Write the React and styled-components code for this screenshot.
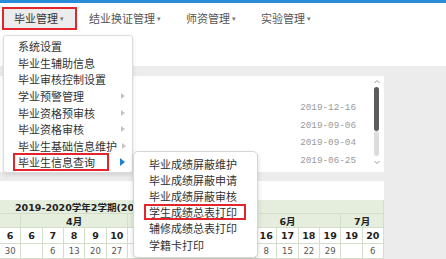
import React from 'react';
import styled, { createGlobalStyle } from 'styled-components';

const GlobalStyle = createGlobalStyle`
  html, body {
    margin: 0;
    padding: 0;
    background: #fff;
  }
  body {
    font-family: "Noto Sans CJK SC", "Liberation Sans", sans-serif;
    width: 446px;
    height: 259px;
    overflow: hidden;
  }
`;

const Page = styled.div`
  position: relative;
  width: 446px;
  height: 259px;
  overflow: hidden;
  display: flex;
  flex-direction: column;
`;

const TopStrip = styled.div`
  height: 3px;
  background: #2b8bd9;
`;

const NavBar = styled.nav`
  height: 30px;
  display: flex;
  align-items: center;
  padding-left: 2px;
  background: #fff;
`;

const NavItem = styled.div`
  box-sizing: border-box;
  height: 23px;
  display: flex;
  align-items: center;
  gap: 2px;
  padding: 0 10px;
  border: 2px solid ${p => (p.$active ? '#e3262c' : 'transparent')};
  background: ${p => (p.$active ? '#ececec' : 'transparent')};
  font-size: 11px;
  color: ${p => (p.$active ? '#333' : '#555')};
  white-space: nowrap;
`;

const Caret = styled.span`
  font-size: 7px;
  color: #777;
  width: 5px;
  line-height: 1;
`;

const WhiteGap = styled.div`
  height: 33px;
  background: #fff;
`;

const Body = styled.div`
  flex: 1;
  display: flex;
  padding-top: 10px;
  background: #ececec;
`;

const MainCol = styled.div`
  width: 384px;
  display: flex;
  flex-direction: column;
  gap: 9px;
`;

const ListPanel = styled.div`
  height: 96px;
  display: flex;
  background: #fff;
`;

const DateList = styled.ul`
  flex: 1;
  list-style: none;
  margin: 0;
  padding: 23px 17px 0 0;
`;

const DateRow = styled.li`
  height: 17.6px;
  display: flex;
  align-items: center;
  justify-content: flex-end;
  font-family: "Liberation Mono", monospace;
  font-size: 9.3px;
  color: #9a9a9a;
`;

const Scrollbar = styled.div`
  width: 7px;
  margin: 3px 4px 0 0;
  display: flex;
  flex-direction: column;
  align-items: center;
`;

const Thumb = styled.div`
  width: 5px;
  height: 44px;
  margin-top: 3px;
  border-radius: 3px;
  background: #5c5c5c;
`;

const Track = styled.div`
  width: 5px;
  height: 25px;
  border-radius: 3px;
  background: #dcdcdc;
`;

const Chevron = ({ down }) => (
  <svg width="6" height="5" viewBox="0 0 6 5" style={{ marginTop: down ? 4 : 0 }}>
    <path d={down ? 'M0.5 1 L3 3.5 L5.5 1' : 'M0.5 4 L3 1.5 L5.5 4'} fill="none" stroke="#999" strokeWidth="1" />
  </svg>
);

const CalendarPanel = styled.div`
  flex: 1;
  background: #fff;
  padding-top: 19px;
`;

const Calendar = styled.div`
  display: grid;
  grid-template-columns: repeat(18, 1fr);
  width: 384px;
  font-family: "DejaVu Sans", Verdana, "Noto Sans CJK SC", sans-serif;
`;

const Cell = styled.div`
  box-sizing: border-box;
  grid-column: span ${p => p.$span || 1};
  height: ${p => p.$h}px;
  display: flex;
  align-items: center;
  justify-content: ${p => (p.$left ? 'flex-start' : 'center')};
  padding-left: ${p => (p.$left ? '15px' : '0')};
  border-right: 1px solid #d3dfcb;
  border-bottom: 1px solid #d3dfcb;
  background: ${p => (p.$green ? '#e5eedd' : '#fff')};
  font-size: ${p => (p.$bold ? '9.5px' : '8.5px')};
  font-weight: ${p => (p.$bold ? 700 : 400)};
  color: ${p => (p.$bold ? '#222' : '#555')};
  white-space: nowrap;
  overflow: hidden;
`;

const Side = styled.div`
  flex: 1;
`;

const Menu = styled.div`
  position: absolute;
  left: 3px;
  top: 35px;
  width: 130px;
  height: 138px;
  box-sizing: border-box;
  padding-top: 2px;
  background: #fff;
  border: 1px solid #dcdcdc;
  border-radius: 3px;
  box-shadow: 0 2px 4px rgba(0, 0, 0, 0.12);
  z-index: 2;
`;

const MenuItem = styled.div`
  height: 16.6px;
  display: flex;
  align-items: center;
  justify-content: space-between;
  padding: 0 7px 0 9px;
  font-size: 11px;
  color: #333;
  white-space: nowrap;
`;

const Label = styled.span`
  box-sizing: border-box;
  display: inline-block;
  width: ${p => (p.$boxed ? `${p.$w}px` : 'auto')};
  line-height: ${p => p.$lh}px;
  padding: 0 3px;
  border: 2px solid ${p => (p.$boxed ? '#e3262c' : 'transparent')};
`;

const Arrow = styled.span`
  width: 0;
  height: 0;
  border-top: ${p => (p.$blue ? 4 : 3)}px solid transparent;
  border-bottom: ${p => (p.$blue ? 4 : 3)}px solid transparent;
  border-left: ${p => (p.$blue ? 5 : 4)}px solid ${p => (p.$blue ? '#1b7fd6' : '#c4c4c4')};
`;

const SubMenu = styled.div`
  position: absolute;
  left: 133px;
  top: 151px;
  width: 125px;
  height: 107px;
  box-sizing: border-box;
  padding-top: 3.5px;
  background: #fff;
  border: 1px solid #d6d6d6;
  border-radius: 5px;
  box-shadow: 0 2px 5px rgba(0, 0, 0, 0.15);
  z-index: 3;
`;

const SubItem = styled.div`
  height: 16.2px;
  display: flex;
  align-items: center;
  padding-left: 10px;
  font-size: 11px;
  color: #333;
  white-space: nowrap;
`;

const navItems = ['毕业管理', '结业换证管理', '师资管理', '实验管理'];

const menuItems = [
  { label: '系统设置' },
  { label: '毕业生辅助信息' },
  { label: '毕业审核控制设置' },
  { label: '学业预警管理', sub: true },
  { label: '毕业资格预审核', sub: true },
  { label: '毕业资格审核', sub: true },
  { label: '毕业生基础信息维护', sub: true },
  { label: '毕业生信息查询', sub: true, active: true },
];

const subItems = [
  '毕业成绩屏蔽维护',
  '毕业成绩屏蔽申请',
  '毕业成绩屏蔽审核',
  '学生成绩总表打印',
  '辅修成绩总表打印',
  '学籍卡打印',
];

const dates = ['2019-12-16', '2019-09-06', '2019-09-04', '2019-06-25'];

// columns 6-11 sit under the open submenu, left blank
const months = [
  { label: '', span: 1 },
  { label: '4月', span: 5 },
  { label: '', span: 5 },
  { label: '6月', span: 5 },
  { label: '7月', span: 2 },
];

const weeks = ['6', '6', '7', '8', '9', '10', '', '', '', '', '', '', '16', '17', '18', '19', '19', '20'];
const days = ['30', '', '6', '13', '20', '27', '', '', '', '', '', '', '8', '15', '22', '29', '', '6'];

export default function App() {
  return (
    <Page>
      <GlobalStyle />
      <TopStrip />
      <NavBar>
        {navItems.map((n, i) => (
          <NavItem key={n} $active={i === 0}>
            {n}
            <Caret>▾</Caret>
          </NavItem>
        ))}
      </NavBar>
      <WhiteGap />
      <Body>
        <MainCol>
          <ListPanel>
            <DateList>
              {dates.map(d => (
                <DateRow key={d}>{d}</DateRow>
              ))}
            </DateList>
            <Scrollbar>
              <Chevron />
              <Thumb />
              <Track />
              <Chevron down />
            </Scrollbar>
          </ListPanel>
          <CalendarPanel>
            <Calendar>
              <Cell $span={18} $h={14} $green $bold $left>
                2019-2020学年2学期(2020)
              </Cell>
              {months.map((m, i) => (
                <Cell key={i} $span={m.span} $h={14} $green $bold>
                  {m.label}
                </Cell>
              ))}
              {weeks.map((w, i) => (
                <Cell key={i} $h={16} $bold>
                  {w}
                </Cell>
              ))}
              {days.map((d, i) => (
                <Cell key={i} $h={15}>
                  {d}
                </Cell>
              ))}
            </Calendar>
          </CalendarPanel>
        </MainCol>
        <Side />
      </Body>

      <Menu>
        {menuItems.map(m => (
          <MenuItem key={m.label}>
            <Label $boxed={m.active} $w={96} $lh={14}>
              {m.label}
            </Label>
            {m.sub && <Arrow $blue={m.active} />}
          </MenuItem>
        ))}
      </Menu>

      <SubMenu>
        {subItems.map((s, i) => (
          <SubItem key={s}>
            <Label $boxed={i === 3} $w={102} $lh={12}>
              {s}
            </Label>
          </SubItem>
        ))}
      </SubMenu>
    </Page>
  );
}
